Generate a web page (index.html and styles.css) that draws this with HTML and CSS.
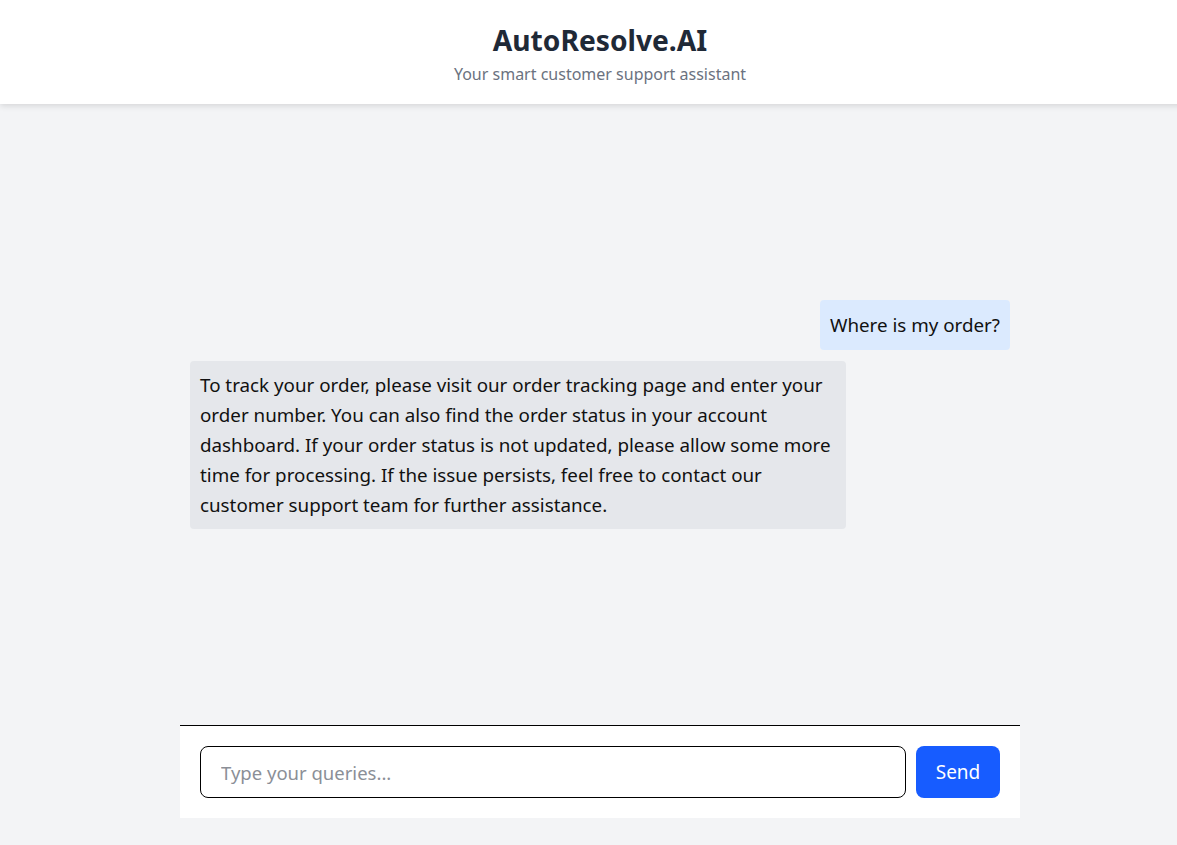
FILE: index.html
```html
<!DOCTYPE html>
<html lang="en">
<head>
<meta charset="utf-8">
<title>AutoResolve.AI</title>
<link rel="stylesheet" href="styles.css">
</head>
<body>
<header class="header">
  <h1 class="title">AutoResolve.AI</h1>
  <p class="subtitle">Your smart customer support assistant</p>
</header>
<main class="main">
  <div class="chat">
    <div class="messages">
      <div class="msg msg-user">Where is my order?</div>
      <div class="msg msg-bot">To track your order, please visit our order tracking page and enter your order number. You can also find the order status in your account dashboard. If your order status is not updated, please allow some more time for processing. If the issue persists, feel free to contact our customer support team for further assistance.</div>
    </div>
    <form class="composer">
      <input class="input" type="text" placeholder="Type your queries...">
      <button class="send" type="button">Send</button>
    </form>
  </div>
</main>
</body>
</html>
```
FILE: styles.css
```css
* { box-sizing: border-box; }
html { height: 100%; overflow: hidden; }
body {
  margin: 0;
  width: 1200px;
  height: 100%;
  background: #f3f4f6;
  font-family: "Noto Sans", "Open Sans", sans-serif;
  color: #111;
  display: flex;
  flex-direction: column;
}
.header {
  background: #fff;
  height: 104px;
  box-shadow: 0 2px 6px rgba(0,0,0,0.12);
  text-align: center;
  padding-top: 22px;
  position: relative;
  z-index: 1;
}
.title {
  margin: 0;
  font-size: 28.2px;
  line-height: 36px;
  font-weight: 700;
  color: #1f2937;
}
.subtitle {
  margin: 4px 0 0;
  font-size: 16px;
  line-height: 24px;
  color: #6b7280;
}
.main {
  flex: 1;
  display: flex;
  justify-content: center;
  padding-bottom: 27px;
}
.chat {
  width: 840px;
  display: flex;
  flex-direction: column;
}
.messages {
  flex: 1;
  display: flex;
  flex-direction: column;
  justify-content: center;
  gap: 11px;
  padding: 10px;
}
.msg {
  max-width: 80%;
  padding: 9px 10px;
  border-radius: 4px;
  font-size: 18.8px;
  line-height: 30px;
  color: #111;
}
.msg-user {
  align-self: flex-end;
  background: #dbeafe;
  padding: 10px;
}
.msg-bot {
  align-self: flex-start;
  background: #e5e7eb;
}
.composer {
  margin: 0;
  background: #fff;
  border-top: 1px solid #000;
  padding: 20px;
  display: flex;
  gap: 10px;
}
.input {
  flex: 1;
  height: 52px;
  border: 1px solid #000;
  border-radius: 8px;
  padding: 0 20px;
  font-family: inherit;
  font-size: 18.5px;
  outline: none;
}
.input::placeholder { color: #8b8f97; }
.send {
  width: 84px;
  height: 52px;
  border: none;
  border-radius: 8px;
  background: #175cff;
  color: #fff;
  font-family: inherit;
  font-size: 19px;
}
```
